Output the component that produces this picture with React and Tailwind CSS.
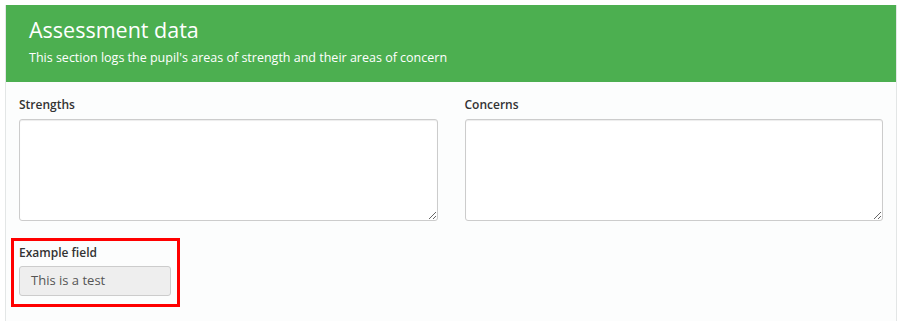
export default function App() {
  return (
    <div className="min-h-[321px] bg-white pt-[5px] pl-[5px] pr-[6px] font-['Open_Sans',sans-serif]">
      <div className="border border-[#e3e6e6] border-t-0 bg-[#fcfdfd] min-h-[330px]">
        <div className="bg-[#4caf50] h-[77px] pl-[23px] pt-[10px] text-white">
          <h1 className="text-[21.5px] leading-[30px]">Assessment data</h1>
          <p className="text-[12.5px] mt-[4px] leading-[18px]">
            This section logs the pupil's areas of strength and their areas of concern
          </p>
        </div>
        <div className="px-[13px] pt-[14px]">
          <div className="grid grid-cols-2 gap-[27px]">
            <div>
              <label className="block text-[12px] font-semibold text-[#333] leading-[18px] mb-[5px]">
                Strengths
              </label>
              <textarea className="block w-full h-[102px] border border-[#ccc] rounded-[3px] bg-white shadow-[inset_0_1px_1px_rgba(0,0,0,0.075)]" />
            </div>
            <div>
              <label className="block text-[12px] font-semibold text-[#333] leading-[18px] mb-[5px]">
                Concerns
              </label>
              <textarea className="block w-full h-[102px] border border-[#ccc] rounded-[3px] bg-white shadow-[inset_0_1px_1px_rgba(0,0,0,0.075)]" />
            </div>
          </div>
          <div className="mt-[17px] -ml-[8px] w-[169px] border-[3px] border-[#ff0000] pl-[5px] pr-[6px] pt-[3px] pb-[8px]">
            <label className="block text-[12px] font-semibold text-[#333] leading-[18px] mb-[4px]">
              Example field
            </label>
            <div className="h-[30px] border border-[#ccc] rounded-[3px] bg-[#eee] pl-[11px] flex items-center text-[13px] text-[#555]">
              This is a test
            </div>
          </div>
        </div>
      </div>
    </div>
  );
}
